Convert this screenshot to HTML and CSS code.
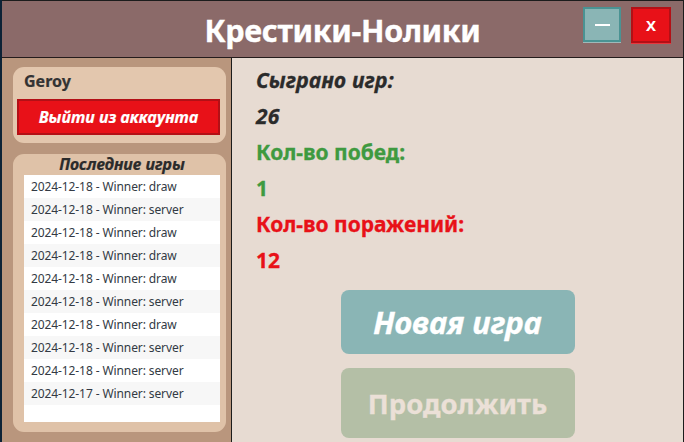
FILE: index.html
```html
<!DOCTYPE html>
<html lang="ru">
<head>
<meta charset="utf-8">
<title>Крестики-Нолики</title>
<link rel="stylesheet" href="styles.css">
</head>
<body>
<div class="window">
  <header class="titlebar">
    <div class="spacer"></div>
    <h1 class="title">Крестики-Нолики</h1>
    <div class="controls">
      <button class="ctl ctl-min" aria-label="Свернуть"><span class="dash"></span></button>
      <button class="ctl ctl-close">X</button>
    </div>
  </header>
  <main class="main">
    <aside class="sidebar">
      <section class="card card-user">
        <div class="username">Geroy</div>
        <button class="logout">Выйти из аккаунта</button>
      </section>
      <section class="card card-games">
        <div class="games-title">Последние игры</div>
        <ul class="games">
          <li>2024-12-18 - Winner: draw</li>
          <li>2024-12-18 - Winner: server</li>
          <li>2024-12-18 - Winner: draw</li>
          <li>2024-12-18 - Winner: draw</li>
          <li>2024-12-18 - Winner: draw</li>
          <li>2024-12-18 - Winner: server</li>
          <li>2024-12-18 - Winner: draw</li>
          <li>2024-12-18 - Winner: server</li>
          <li>2024-12-18 - Winner: server</li>
          <li>2024-12-17 - Winner: server</li>
        </ul>
      </section>
    </aside>
    <section class="content">
      <div class="stats">
        <div class="stat stat-total">Сыграно игр:</div>
        <div class="stat stat-total">26</div>
        <div class="stat stat-win">Кол-во побед:</div>
        <div class="stat stat-win">1</div>
        <div class="stat stat-loss">Кол-во поражений:</div>
        <div class="stat stat-loss">12</div>
      </div>
      <div class="actions">
        <button class="action action-new">Новая игра</button>
        <button class="action action-continue">Продолжить</button>
      </div>
    </section>
  </main>
</div>
</body>
</html>
```
FILE: styles.css
```css
* { box-sizing: border-box; }
html, body {
  margin: 0;
  padding: 0;
  width: 684px;
  height: 442px;
  overflow: hidden;
  background: #0c2236;
  font-family: "Noto Sans", "Open Sans", sans-serif;
}
.window {
  margin-left: 2px;
  height: 442px;
  border-top: 1px solid #1c1c1c;
  border-right: 1px solid #1c1c1c;
  display: flex;
  flex-direction: column;
}
.titlebar {
  height: 57px;
  flex: none;
  background: #8b6a69;
  border-bottom: 1px solid #241c1c;
  display: grid;
  grid-template-columns: 1fr auto 1fr;
  align-items: center;
}
.title {
  margin: 0;
  color: #fff;
  font-size: 30.5px;
  font-weight: 700;
  letter-spacing: -0.3px;
  line-height: 1;
  padding-top: 2px;
  -webkit-text-stroke: 0.4px #fff;
}
.controls {
  justify-self: end;
  align-self: start;
  margin-top: 6px;
  margin-right: 12px;
  display: flex;
  gap: 10px;
}
.ctl {
  padding: 0;
  margin: 0;
  border-style: solid;
  border-width: 2px;
  display: flex;
  align-items: center;
  justify-content: center;
  font-family: inherit;
}
.ctl-min {
  width: 38px;
  height: 35px;
  background: #8ab5b5;
  border-color: #4a9393;
  box-shadow: 0 1px 0 #9fb9b9;
}
.dash {
  width: 15px;
  height: 2px;
  background: #fff;
}
.ctl-close {
  width: 40px;
  height: 36px;
  background: #e81118;
  border-color: #b31016;
  color: #fff;
  font-size: 15px;
  font-weight: 700;
  box-shadow: 0 1px 0 #e8363c;
}
.main {
  flex: 1;
  display: flex;
  min-height: 0;
}
.sidebar {
  width: 230px;
  flex: none;
  background: #b9967d;
  border-right: 1px solid #1c1c1c;
  padding: 9px 5px 0 11px;
  display: flex;
  flex-direction: column;
  gap: 11px;
}
.card {
  background: #e3c7ae;
  border-radius: 11px;
}
.card-user {
  height: 76px;
  padding: 4px 5px 0 4px;
}
.username {
  font-size: 16px;
  font-weight: 700;
  color: #333;
  padding-left: 7px;
  height: 28px;
  line-height: 20px;
  -webkit-text-stroke: 0.2px #333;
}
.logout {
  width: 203px;
  height: 36px;
  margin: 0;
  background: #e81118;
  border: 2px solid #b31016;
  color: #fff;
  font-family: inherit;
  font-size: 16px;
  font-weight: 700;
  font-style: italic;
  padding: 0;
  -webkit-text-stroke: 0.2px #fff;
}
.card-games {
  height: 278px;
  padding: 0 6px 10px 11px;
  background: #dfc2a8;
  display: flex;
  flex-direction: column;
}
.games-title {
  text-align: center;
  font-size: 16px;
  font-weight: 700;
  font-style: italic;
  color: #2b2b2b;
  height: 21px;
  line-height: 21px;
  -webkit-text-stroke: 0.2px #2b2b2b;
}
.games {
  list-style: none;
  margin: 0;
  padding: 0;
  flex: 1;
  background: #fff;
}
.games li {
  height: 23px;
  line-height: 23px;
  padding-left: 7px;
  font-size: 12px;
  color: #333a44;
  letter-spacing: -0.1px;
}
.games li:nth-child(even) {
  background: #f7f7f7;
}
.content {
  flex: 1;
  background: #e7dbd2;
  display: flex;
  flex-direction: column;
  padding: 4px 0 0 24px;
}
.stats {
  display: flex;
  flex-direction: column;
}
.stat {
  height: 36px;
  line-height: 36px;
  font-size: 21px;
  font-weight: 700;
  -webkit-text-stroke: 0.3px currentColor;
}
.stat-total {
  font-style: italic;
  color: #2b2b2b;
  letter-spacing: 0.3px;
}
.stat-win { color: #3f9a40; }
.stat-loss { color: #e81118; }
.actions {
  margin-top: 12px;
  margin-left: -24px;
  display: flex;
  flex-direction: column;
  align-items: center;
  gap: 14px;
}
.action {
  width: 234px;
  border: none;
  border-radius: 8px;
  font-family: inherit;
  font-weight: 700;
  padding: 0;
}
.action-new {
  height: 64px;
  background: #8ab5b5;
  color: #fff;
  font-style: italic;
  font-size: 31px;
  -webkit-text-stroke: 0.3px #fff;
}
.action-continue {
  height: 70px;
  background: #b4bfa6;
  color: #ebe0d7;
  font-size: 27.5px;
  -webkit-text-stroke: 0.3px #ebe0d7;
}
```
